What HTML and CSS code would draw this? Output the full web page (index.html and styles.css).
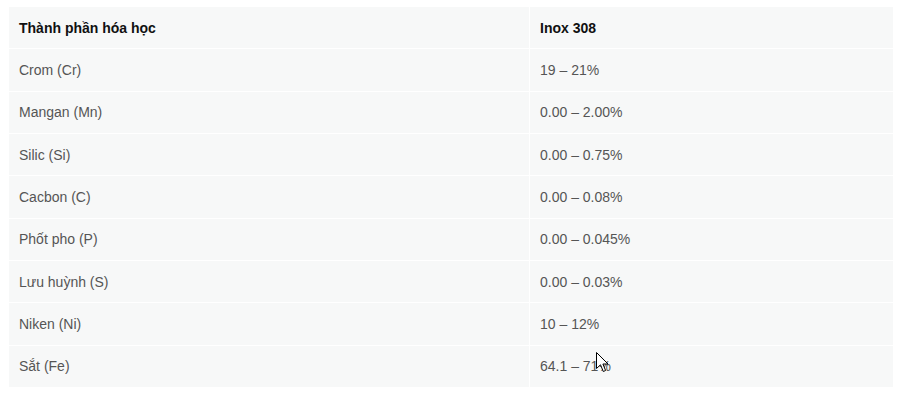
FILE: index.html
```html
<!DOCTYPE html>
<html lang="vi">
<head>
<meta charset="utf-8">
<link rel="stylesheet" href="styles.css">
</head>
<body>
<div class="wrap">
<table class="spec">
  <thead>
    <tr><th class="c1">Thành phần hóa học</th><th>Inox 308</th></tr>
  </thead>
  <tbody>
    <tr><td class="c1">Crom (Cr)</td><td>19 – 21%</td></tr>
    <tr><td class="c1">Mangan (Mn)</td><td>0.00 – 2.00%</td></tr>
    <tr><td class="c1">Silic (Si)</td><td>0.00 – 0.75%</td></tr>
    <tr><td class="c1">Cacbon (C)</td><td>0.00 – 0.08%</td></tr>
    <tr><td class="c1">Phốt pho (P)</td><td>0.00 – 0.045%</td></tr>
    <tr><td class="c1">Lưu huỳnh (S)</td><td>0.00 – 0.03%</td></tr>
    <tr><td class="c1">Niken (Ni)</td><td>10 – 12%</td></tr>
    <tr><td class="c1">Sắt (Fe)</td><td>64.1 – 71%</td></tr>
  </tbody>
</table>
<svg class="cursor" width="13" height="21" viewBox="0 0 13 21"><path d="M0.5 0.5 L0.5 16.5 L4.5 12.8 L7.3 19.5 L9.6 18.5 L6.9 12 L12 12 Z" fill="#fff" stroke="#000" stroke-width="1" stroke-linejoin="miter"/></svg>
</div>
</body>
</html>
```
FILE: styles.css
```css
html, body {
  margin: 0;
  padding: 0;
  background: #ffffff;
}
.wrap {
  position: relative;
  padding: 6px 7px 0 8px;
}
.spec {
  width: 886px;
  border-collapse: collapse;
  background: #f7f8f8;
  font-family: "Liberation Sans", Arial, sans-serif;
  font-size: 14px;
  color: #555555;
}
.spec th,
.spec td {
  border: 1px solid #ffffff;
  height: 42.33px;
  padding: 0 10px;
  text-align: left;
  vertical-align: middle;
  box-sizing: border-box;
}
.spec th {
  font-weight: bold;
  color: #111111;
}
.spec .c1 {
  width: 521px;
}
.cursor {
  position: absolute;
  left: 596px;
  top: 352px;
}
```
